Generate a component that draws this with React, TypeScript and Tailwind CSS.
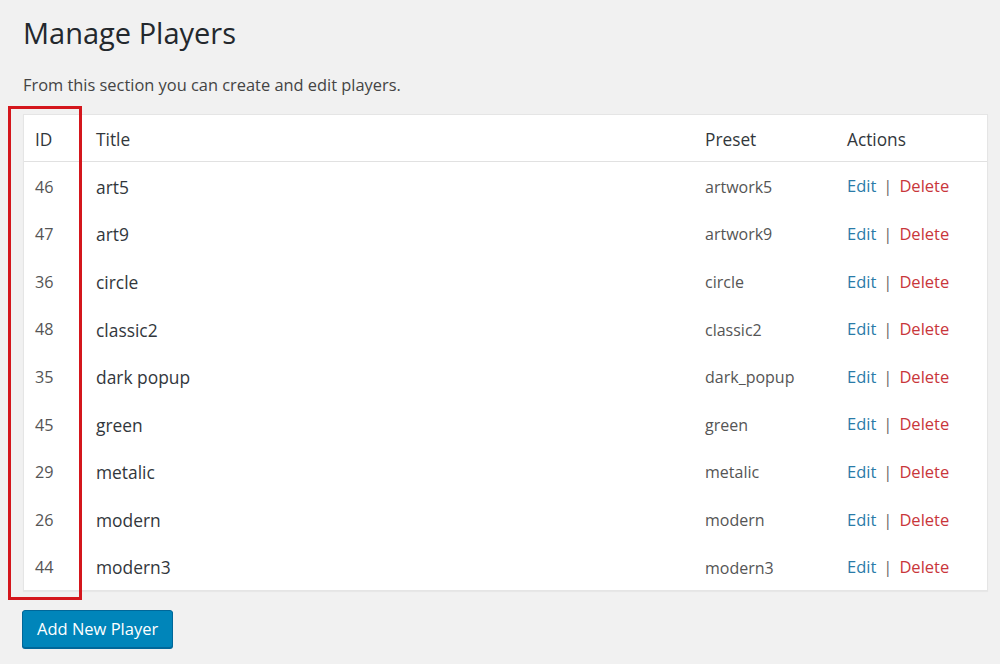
const players = [
  { id: 46, title: 'art5', preset: 'artwork5' },
  { id: 47, title: 'art9', preset: 'artwork9' },
  { id: 36, title: 'circle', preset: 'circle' },
  { id: 48, title: 'classic2', preset: 'classic2' },
  { id: 35, title: 'dark popup', preset: 'dark_popup' },
  { id: 45, title: 'green', preset: 'green' },
  { id: 29, title: 'metalic', preset: 'metalic' },
  { id: 26, title: 'modern', preset: 'modern' },
  { id: 44, title: 'modern3', preset: 'modern3' },
];

export default function App() {
  return (
    <div className="min-h-[664px] bg-[#f1f1f1] px-[23px] pt-[15px] text-[#444] font-['Open_Sans',sans-serif]">
      <h1 className="text-[29px] leading-[36px] text-[#23282d]">Manage Players</h1>
      <p className="mt-[23px] text-[16.4px] leading-[22px] text-[#444]">
        From this section you can create and edit players.
      </p>

      <div className="relative mt-[18px] w-[965px]">
        <div className="border border-[#e5e5e5] bg-white shadow-[0_1px_1px_rgba(0,0,0,0.04)]">
          {/* header */}
          <div className="grid h-[47px] grid-cols-[61px_609px_142px_1fr] items-center border-b border-[#e1e1e1] pt-[3px] text-[17.3px] text-[#32373c]">
            <div className="pl-[11px]">ID</div>
            <div className="pl-[11px]">Title</div>
            <div className="pl-[11px]">Preset</div>
            <div className="pl-[11px]">Actions</div>
          </div>
          {players.map((p) => (
            <div
              key={p.id}
              className="grid h-[47.6px] grid-cols-[61px_609px_142px_1fr] items-center pt-[2px]"
            >
              <div className="pl-[11px] text-[16.2px] text-[#555]">{p.id}</div>
              <div className="pl-[11px] text-[17.4px] text-[#32373c]">{p.title}</div>
              <div className="pl-[11px] text-[16px] text-[#555]">{p.preset}</div>
              <div className="pl-[11px] text-[16.5px]">
                <a className="text-[#2a7ba8]">Edit</a>
                <span className="mx-[7px] text-[#666]">|</span>
                <a className="text-[#c9363b]">Delete</a>
              </div>
            </div>
          ))}
        </div>

        {/* highlight around ID column */}
        <div className="pointer-events-none absolute -left-[15px] -top-[8px] h-[494px] w-[74px] border-[3px] border-[#d4161c]" />
      </div>

      <button className="-ml-px mt-[19px] h-[38px] rounded-[3px] border border-[#006799] bg-[#0085ba] px-[14px] text-[16.5px] text-white shadow-[0_1px_0_#006799]">
        Add New Player
      </button>
    </div>
  );
}
